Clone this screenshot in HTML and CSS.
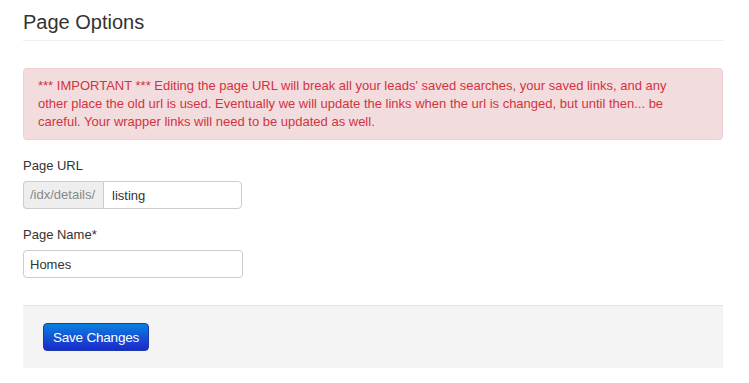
FILE: index.html
```html
<!DOCTYPE html>
<html>
<head>
<meta charset="utf-8">
<link rel="stylesheet" href="styles.css">
</head>
<body>
<div class="page">
  <h1 class="title">Page Options</h1>
  <div class="alert">*** IMPORTANT *** Editing the page URL will break all your leads' saved searches, your saved links, and any other place the old url is used. Eventually we will update the links when the url is changed, but until then... be careful. Your wrapper links will need to be updated as well.</div>
  <div class="field">
    <label class="label">Page URL</label>
    <div class="input-group">
      <span class="addon">/idx/details/</span>
      <input class="input input-grouped" type="text" value="listing">
    </div>
  </div>
  <div class="field">
    <label class="label">Page Name*</label>
    <input class="input input-single" type="text" value="Homes">
  </div>
  <div class="actions">
    <button class="btn-primary">Save Changes</button>
  </div>
</div>
</body>
</html>
```
FILE: styles.css
```css
html, body {
  margin: 0;
  padding: 0;
  background: #fff;
}
body {
  font-family: "Liberation Sans", Arial, Helvetica, sans-serif;
  font-size: 13px;
  line-height: 18px;
  color: #333;
}
.page {
  width: 700px;
  padding: 10px 0 0 23px;
}
.title {
  margin: 0;
  font-size: 20px;
  line-height: 24px;
  font-weight: normal;
  color: #333;
  padding-bottom: 6px;
  border-bottom: 1px solid #eee;
}
.alert {
  margin-top: 27px;
  padding: 8px 35px 8px 14px;
  background: #f3dcdd;
  border: 1px solid #efcfd3;
  border-radius: 4px;
  color: #d1343f;
  line-height: 18px;
}
.field {
  margin-top: 17px;
}
.label {
  display: block;
  color: #333;
  margin-bottom: 6px;
}
.input-group {
  display: flex;
  width: 219px;
}
.addon {
  box-sizing: border-box;
  width: 80px;
  height: 28px;
  padding: 0 0 0 6px;
  line-height: 26px;
  white-space: nowrap;
  background: #eee;
  color: #888;
  border: 1px solid #ccc;
  border-right: none;
  border-radius: 4px 0 0 4px;
}
.input {
  box-sizing: border-box;
  height: 28px;
  font-family: "Liberation Sans", Arial, Helvetica, sans-serif;
  font-size: 13px;
  color: #333;
  border: 1px solid #ccc;
  background: #fff;
  outline: none;
  margin: 0;
}
.input-grouped {
  flex: 1;
  min-width: 0;
  padding: 0 8px;
  border-radius: 0 4px 4px 0;
}
.input-single {
  display: block;
  width: 220px;
  padding: 0 6px;
  border-radius: 4px;
}
.actions {
  margin-top: 27px;
  background: #f4f4f4;
  border-top: 1px solid #e2e2e2;
  padding: 17px 20px 17px;
}
.btn-primary {
  display: block;
  box-sizing: border-box;
  width: 106px;
  height: 28px;
  padding: 0;
  font-family: "Liberation Sans", Arial, Helvetica, sans-serif;
  font-size: 13.5px;
  color: #fff;
  background: linear-gradient(#0a80de, #1d28cc);
  border: 1px solid #1a3aa8;
  border-radius: 4px;
  letter-spacing: -0.2px;
}
```
